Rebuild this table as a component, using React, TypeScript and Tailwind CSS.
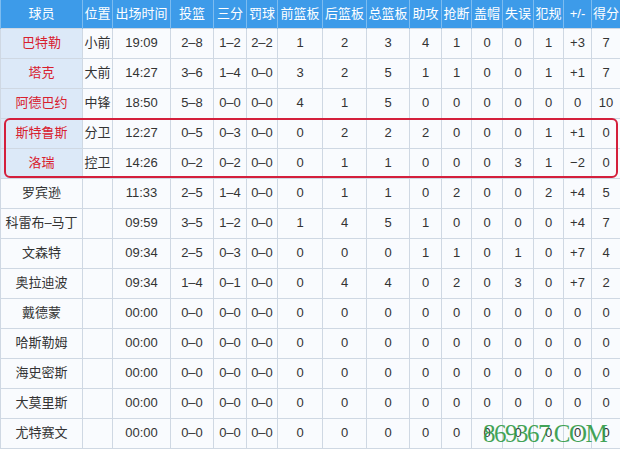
import React from 'react';

const headers = ['球员', '位置', '出场时间', '投篮', '三分', '罚球', '前篮板', '后篮板', '总篮板', '助攻', '抢断', '盖帽', '失误', '犯规', '+/-', '得分'];
const widths = [82, 30, 58, 43, 33, 31, 45, 44, 43, 32, 30, 31, 31, 30, 28, 29];

type Row = { name: string; starter?: boolean; cells: string[] };

const rows: Row[] = [
  { name: '巴特勒', starter: true, cells: ['小前', '19:09', '2–8', '1–2', '2–2', '1', '2', '3', '4', '1', '0', '0', '1', '+3', '7'] },
  { name: '塔克', starter: true, cells: ['大前', '14:27', '3–6', '1–4', '0–0', '3', '2', '5', '1', '1', '0', '0', '1', '+1', '7'] },
  { name: '阿德巴约', starter: true, cells: ['中锋', '18:50', '5–8', '0–0', '0–0', '4', '1', '5', '0', '0', '0', '0', '0', '0', '10'] },
  { name: '斯特鲁斯', starter: true, cells: ['分卫', '12:27', '0–5', '0–3', '0–0', '0', '2', '2', '2', '0', '0', '0', '1', '+1', '0'] },
  { name: '洛瑞', starter: true, cells: ['控卫', '14:26', '0–2', '0–2', '0–0', '0', '1', '1', '0', '0', '0', '3', '1', '−2', '0'] },
  { name: '罗宾逊', cells: ['', '11:33', '2–5', '1–4', '0–0', '0', '1', '1', '0', '2', '0', '0', '2', '+4', '5'] },
  { name: '科雷布–马丁', cells: ['', '09:59', '3–5', '1–2', '0–0', '1', '4', '5', '1', '0', '0', '0', '0', '+4', '7'] },
  { name: '文森特', cells: ['', '09:34', '2–5', '0–3', '0–0', '0', '0', '0', '1', '1', '0', '1', '0', '+7', '4'] },
  { name: '奥拉迪波', cells: ['', '09:34', '1–4', '0–1', '0–0', '0', '4', '4', '0', '2', '0', '3', '0', '+7', '2'] },
  { name: '戴德蒙', cells: ['', '00:00', '0–0', '0–0', '0–0', '0', '0', '0', '0', '0', '0', '0', '0', '0', '0'] },
  { name: '哈斯勒姆', cells: ['', '00:00', '0–0', '0–0', '0–0', '0', '0', '0', '0', '0', '0', '0', '0', '0', '0'] },
  { name: '海史密斯', cells: ['', '00:00', '0–0', '0–0', '0–0', '0', '0', '0', '0', '0', '0', '0', '0', '0', '0'] },
  { name: '大莫里斯', cells: ['', '00:00', '0–0', '0–0', '0–0', '0', '0', '0', '0', '0', '0', '0', '0', '0', '0'] },
  { name: '尤特赛文', cells: ['', '00:00', '0–0', '0–0', '0–0', '0', '0', '0', '0', '0', '0', '0', '0', '0', '0'] },
];

export default function App() {
  return (
    <div
      className="relative w-[620px] h-[449px] overflow-hidden bg-white"
      style={{ fontFamily: '"Liberation Sans", "Noto Sans CJK SC", sans-serif' }}
    >
      <table className="border-collapse table-fixed w-[620px] text-[13px] text-[#333]">
        <colgroup>
          {widths.map((w, i) => (
            <col key={i} style={{ width: w }} />
          ))}
        </colgroup>
        <thead>
          <tr className="h-[28px] bg-[#3d9be9] text-white">
            {headers.map(h => (
              <th key={h} className="border-x border-[#7dbcf0] font-normal text-center p-0 whitespace-nowrap">
                {h}
              </th>
            ))}
          </tr>
        </thead>
        <tbody>
          {rows.map(r => (
            <tr key={r.name} className="h-[30px] bg-[#f9fbfe]">
              <td
                className={
                  r.starter
                    ? 'border border-[#cfd8e3] text-center p-0 bg-[#dce9f8] text-[#d8202e] whitespace-nowrap'
                    : 'border border-[#cfd8e3] text-center p-0 whitespace-nowrap'
                }
              >
                {r.name}
              </td>
              {r.cells.map((c, i) => (
                <td key={i} className="border border-[#cfd8e3] text-center p-0 whitespace-nowrap">
                  {c}
                </td>
              ))}
            </tr>
          ))}
        </tbody>
      </table>

      {/* highlight box */}
      <div className="absolute left-[4px] top-[118px] w-[614px] h-[60px] border-2 border-[#d41f3c] rounded-[6px] pointer-events-none" />

      {/* watermark */}
      <div
        className="absolute left-[483px] top-[421px] text-[25px] tracking-[-1.5px] leading-none text-[#2f9a45] opacity-90 pointer-events-none whitespace-nowrap"
        style={{ fontFamily: '"Liberation Serif", serif' }}
      >
        869367.COM
      </div>
    </div>
  );
}
